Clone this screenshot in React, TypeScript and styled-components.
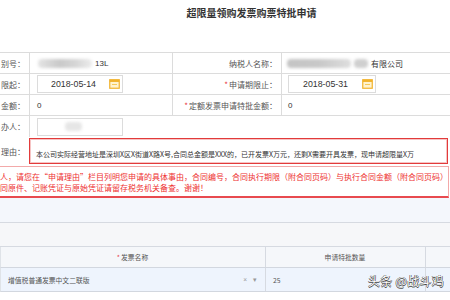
import React from 'react';
import styled, { createGlobalStyle } from 'styled-components';

const GlobalStyle = createGlobalStyle`
  html, body {
    margin: 0;
    padding: 0;
    background: #fff;
  }
  body {
    font-family: "Noto Sans CJK SC", "Liberation Sans", sans-serif;
    color: #333;
  }
`;

const Page = styled.div`
  position: relative;
  width: 450px;
  height: 300px;
  overflow: hidden;
  background: #fff;
`;

const Title = styled.h1`
  margin: 0;
  height: 52px;
  padding: 7px 0 0 53px;
  box-sizing: border-box;
  text-align: center;
  font-size: 10px;
  line-height: 12px;
  font-weight: bold;
  color: #333;
`;

const Form = styled.div`
  border-top: 1px solid #dcdcdc;
`;

const Row = styled.div<{ $cols: string; $h: number; $line?: boolean }>`
  display: grid;
  grid-template-columns: ${({ $cols }) => $cols};
  height: ${({ $h }) => $h}px;
  box-sizing: border-box;
  border-bottom: ${({ $line }) => ($line ? '1px solid #dcdcdc' : 'none')};
`;

const Label = styled.div<{ $edge?: boolean }>`
  display: flex;
  justify-content: flex-end;
  align-items: center;
  white-space: nowrap;
  padding-right: 4px;
  font-size: 8px;
  color: #555;
  border-right: ${({ $edge }) => ($edge ? '1px solid #dcdcdc' : 'none')};
`;

const Star = styled.span`
  color: #e8383d;
  margin-right: 1px;
`;

const Cell = styled.div<{ $edge?: boolean; $pad?: number }>`
  display: flex;
  align-items: center;
  padding-left: ${({ $pad }) => $pad ?? 7}px;
  font-family: "Liberation Sans", "Noto Sans CJK SC", sans-serif;
  font-size: 8px;
  color: #333;
  white-space: nowrap;
  overflow: hidden;
  border-right: ${({ $edge }) => ($edge ? '1px solid #dcdcdc' : 'none')};
`;

const Blur = styled.span<{ $w: number; $tone: string }>`
  display: inline-block;
  width: ${({ $w }) => $w}px;
  height: 9px;
  margin-right: 3px;
  border-radius: 4px;
  background: ${({ $tone }) => $tone};
  filter: blur(1.6px);
`;

const DateBox = styled.div<{ $w: number }>`
  display: flex;
  align-items: center;
  width: ${({ $w }) => $w}px;
  height: 18px;
  box-sizing: border-box;
  border: 1px solid #dcdcdc;
  padding-right: 2px;
`;

const DateText = styled.span`
  flex: 1;
  text-align: center;
  font-family: "Liberation Sans", sans-serif;
  font-size: 8.8px;
  color: #333;
`;

const InputBox = styled.div`
  display: flex;
  align-items: center;
  width: 86px;
  height: 18px;
  box-sizing: border-box;
  border: 1px solid #dcdcdc;
  padding-left: 27px;
`;

const ReasonBox = styled.div`
  margin: 1px 2px 2px 0;
  border: 1.5px solid #e23b3b;
  box-shadow: inset 0 0 0 1px #f6c4c4;
  padding: 11px 0 0 6px;
  font-size: 7px;
  line-height: 9px;
  color: #333;
  white-space: nowrap;
  overflow: hidden;
`;

const Notice = styled.div`
  height: 32px;
  box-sizing: border-box;
  margin-right: 1px;
  border: 1px solid #f3a9a9;
  border-left: none;
  border-bottom: 2px solid #e84a4f;
  padding-top: 4px;
  font-family: "Noto Sans CJK SC", sans-serif;
  font-size: 8px;
  line-height: 11px;
  color: #ee3030;
  white-space: nowrap;
`;

const Bar = styled.div<{ $h: number; $bg: string }>`
  height: ${({ $h }) => $h}px;
  box-sizing: border-box;
  background: ${({ $bg }) => $bg};
  border-bottom: 1px solid #d6dae1;
`;

const GridRow = styled.div<{ $h: number; $bg: string }>`
  display: grid;
  grid-template-columns: 265px 160px 1fr;
  height: ${({ $h }) => $h}px;
  box-sizing: border-box;
  background: ${({ $bg }) => $bg};
  border-bottom: 1px solid #d2d7df;
  border-left: 1px solid #dfe3e8;
`;

const GridCell = styled.div<{ $align?: 'center' | 'left'; $last?: boolean }>`
  display: flex;
  align-items: center;
  justify-content: ${({ $align }) => ($align === 'center' ? 'center' : 'space-between')};
  padding: 0 8px 0 7px;
  font-size: 6.8px;
  color: #555;
  white-space: nowrap;
  border-right: ${({ $last }) => ($last ? 'none' : '1px solid #d6dae1')};
`;

const SelectTools = styled.span`
  display: flex;
  gap: 6px;
  color: #999;
  font-family: "Liberation Sans", sans-serif;
  font-size: 6.5px;
`;

const Watermark = styled.div`
  position: absolute;
  left: 368px;
  top: 273px;
  font-family: "Noto Sans CJK SC", sans-serif;
  font-size: 12px;
  line-height: 16px;
  color: #fff;
  letter-spacing: 0.3px;
  text-shadow: 0.5px 0 0 #444, -0.5px 0 0 #444, 0 0.5px 0 #444, 0 -0.5px 0 #444;
  white-space: nowrap;
`;

const CalendarIcon = () => (
  <svg width="11" height="10" viewBox="0 0 11 10">
    <rect x="0.75" y="0.75" width="9.5" height="8.5" fill="#fff3cf" stroke="#f1b22c" strokeWidth="1.2" />
    <rect x="0.75" y="0.75" width="9.5" height="2.2" fill="#f1b22c" />
    <rect x="3" y="5" width="5" height="1" fill="#f5c95a" />
  </svg>
);

export default function App() {
  return (
    <Page>
      <GlobalStyle />
      <Title>超限量领购发票购票特批申请</Title>
      <Form>
        <Row $cols="30px 143px 109px 1fr" $h={21} $line>
          <Label $edge>别号：</Label>
          <Cell $edge $pad={8}>
            <Blur $w={54} $tone="linear-gradient(90deg,#e4e4e4,#c9c9c9 40%,#d6d6d6 70%,#ececec)" />
            13L
          </Cell>
          <Label $edge>纳税人名称：</Label>
          <Cell $pad={5}>
            <Blur $w={64} $tone="linear-gradient(90deg,#c4c4c4,#c8c8c8 50%,#dedede)" />
            <Blur $w={14} $tone="#cfcfcf" />
            有限公司
          </Cell>
        </Row>
        <Row $cols="30px 143px 109px 1fr" $h={21} $line>
          <Label $edge>限起：</Label>
          <Cell $edge>
            <DateBox $w={86}>
              <DateText>2018-05-14</DateText>
              <CalendarIcon />
            </DateBox>
          </Cell>
          <Label $edge>
            <Star>*</Star>申请期限止：
          </Label>
          <Cell $pad={6}>
            <DateBox $w={88}>
              <DateText>2018-05-31</DateText>
              <CalendarIcon />
            </DateBox>
          </Cell>
        </Row>
        <Row $cols="30px 143px 109px 1fr" $h={21} $line>
          <Label $edge>金额：</Label>
          <Cell $edge>0</Cell>
          <Label $edge>
            <Star>*</Star>定额发票申请特批金额：
          </Label>
          <Cell $pad={6}>0</Cell>
        </Row>
        <Row $cols="30px 1fr" $h={21}>
          <Label $edge>办人：</Label>
          <Cell>
            <InputBox>
              <Blur $w={17} $tone="#e6e6e6" />
            </InputBox>
          </Cell>
        </Row>
        <Row $cols="29px 1fr" $h={29}>
          <Label>理由：</Label>
          <ReasonBox>
            本公司实际经营地址是深圳X区X街道X路X号,合同总金额是XXX的，已开发票X万元，还剩X需要开具发票，现申请超限量X万
          </ReasonBox>
        </Row>
        <Notice>
          人，请您在“申请理由”栏目列明您申请的具体事由，合同编号，合同执行期限（附合同页码）与执行合同金额（附合同页码）
          <br />
          同原件、记账凭证与原始凭证请留存税务机关备查。谢谢！
        </Notice>
      </Form>
      <Bar $h={25} $bg="#f4f7fc" />
      <Bar $h={24} $bg="#f6f7f9" />
      <GridRow $h={21} $bg="#f5f7fa">
        <GridCell $align="center">
          <span>
            <Star>*</Star>发票名称
          </span>
        </GridCell>
        <GridCell $align="center">申请特批数量</GridCell>
        <GridCell $last />
      </GridRow>
      <GridRow $h={24} $bg="#eef4fd">
        <GridCell>
          <span>增值税普通发票中文二联版</span>
          <SelectTools>
            <span>×</span>
            <span>▾</span>
          </SelectTools>
        </GridCell>
        <GridCell>25</GridCell>
        <GridCell $last />
      </GridRow>
      <Watermark>头条 @战斗鸡</Watermark>
    </Page>
  );
}
